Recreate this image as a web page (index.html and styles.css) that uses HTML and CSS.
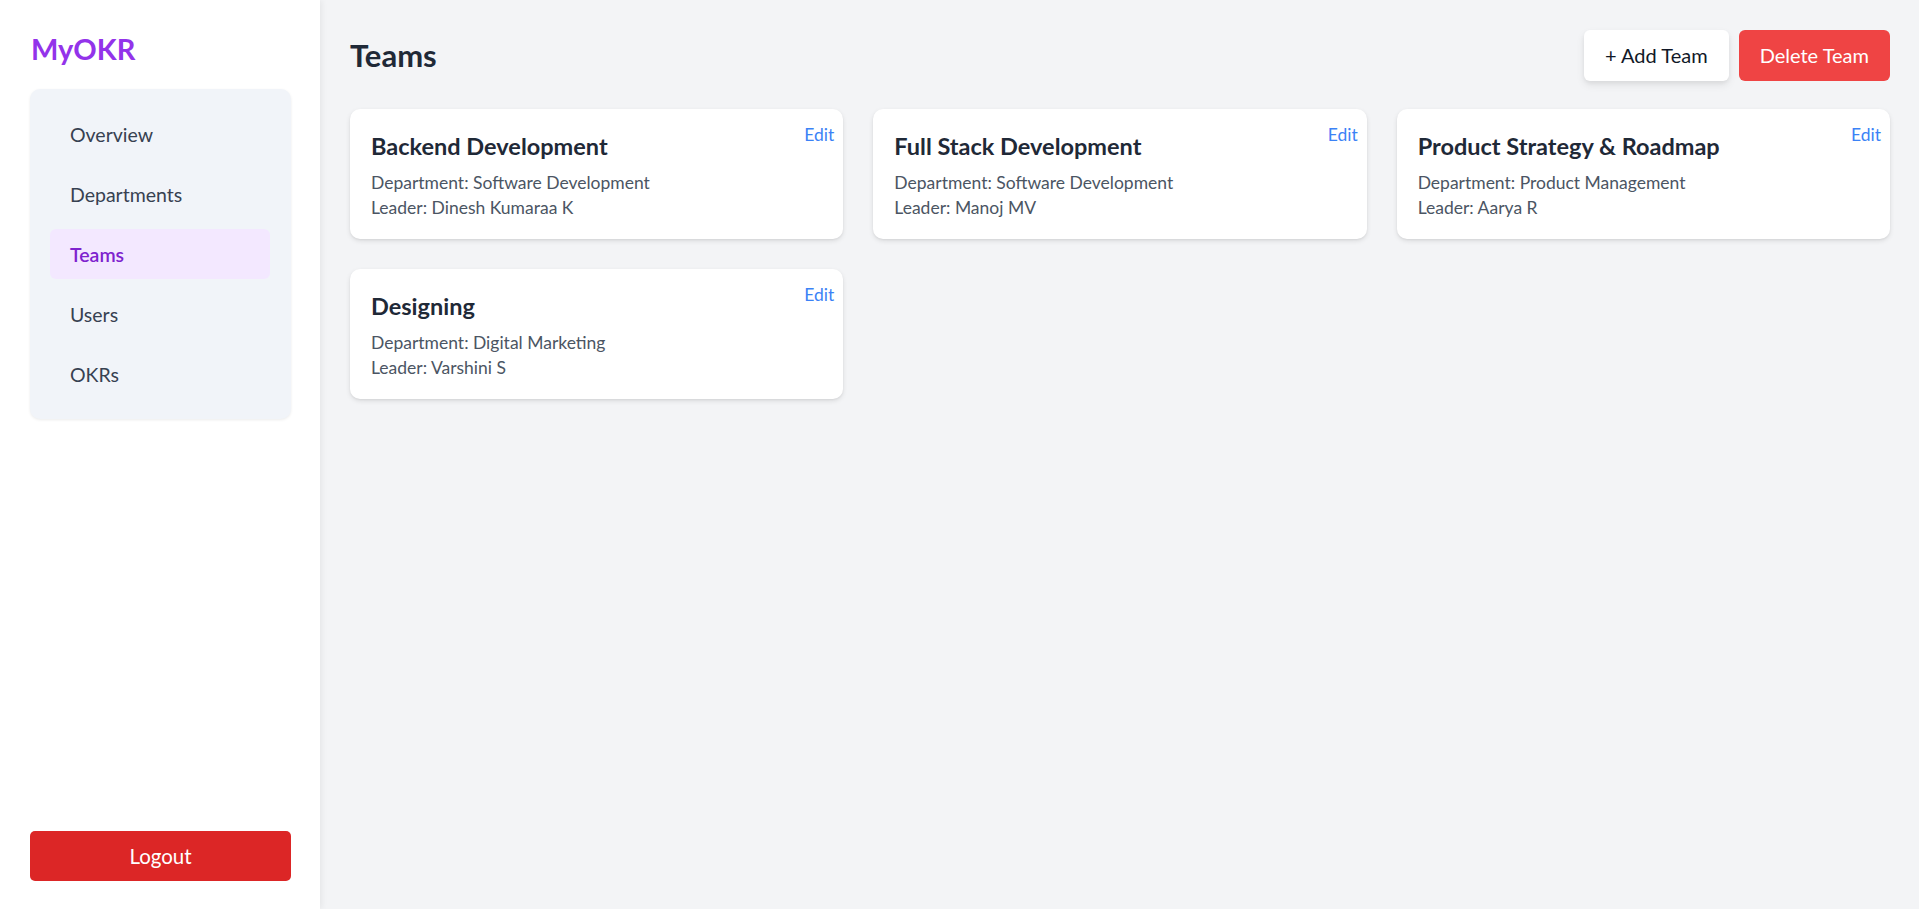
FILE: index.html
```html
<!DOCTYPE html>
<html lang="en">
<head>
<meta charset="utf-8">
<title>MyOKR - Teams</title>
<link rel="stylesheet" href="styles.css">
</head>
<body>
<div class="app">
  <aside class="sidebar">
    <div class="logo">MyOKR</div>
    <nav class="nav">
      <a class="nav-item">Overview</a>
      <a class="nav-item">Departments</a>
      <a class="nav-item active">Teams</a>
      <a class="nav-item">Users</a>
      <a class="nav-item">OKRs</a>
    </nav>
    <button class="logout">Logout</button>
  </aside>
  <main class="main">
    <header class="header">
      <h1 class="title">Teams</h1>
      <div class="actions">
        <button class="btn btn-add">+ Add Team</button>
        <button class="btn btn-delete">Delete Team</button>
      </div>
    </header>
    <section class="grid">
      <div class="card">
        <a class="edit">Edit</a>
        <h2 class="card-title">Backend Development</h2>
        <p class="card-line">Department: Software Development</p>
        <p class="card-line">Leader: Dinesh Kumaraa K</p>
      </div>
      <div class="card">
        <a class="edit">Edit</a>
        <h2 class="card-title">Full Stack Development</h2>
        <p class="card-line">Department: Software Development</p>
        <p class="card-line">Leader: Manoj MV</p>
      </div>
      <div class="card">
        <a class="edit">Edit</a>
        <h2 class="card-title">Product Strategy &amp; Roadmap</h2>
        <p class="card-line">Department: Product Management</p>
        <p class="card-line">Leader: Aarya R</p>
      </div>
      <div class="card">
        <a class="edit">Edit</a>
        <h2 class="card-title">Designing</h2>
        <p class="card-line">Department: Digital Marketing</p>
        <p class="card-line">Leader: Varshini S</p>
      </div>
    </section>
  </main>
</div>
</body>
</html>
```
FILE: styles.css
```css
* { box-sizing: border-box; }
html, body { margin: 0; padding: 0; height: 100%; }
body {
  font-family: "Segoe UI", Lato, "Noto Sans", sans-serif;
  color: #1f2937;
  background: #f3f4f6;
}
.app { display: flex; height: 100vh; }

.sidebar {
  width: 320px;
  flex-shrink: 0;
  background: #ffffff;
  box-shadow: 2px 0 6px rgba(0,0,0,0.06);
  display: flex;
  flex-direction: column;
  padding: 31px 29px 28px 30px;
  position: relative;
  z-index: 1;
}
.logo {
  font-size: 29px;
  line-height: 36px;
  font-weight: 700;
  color: #9333ea;
  padding-left: 1px;
}
.nav {
  margin-top: 22px;
  background: #f1f4f9;
  border-radius: 10px;
  box-shadow: 0 1px 3px rgba(0,0,0,0.08);
  padding: 20px 21px 20px 20px;
  display: flex;
  flex-direction: column;
  gap: 10px;
}
.nav-item {
  height: 50px;
  display: flex;
  align-items: center;
  padding-left: 20px;
  font-size: 19.5px;
  color: #374151;
  border-radius: 6px;
  cursor: pointer;
}
.nav-item.active {
  background: #f3e8ff;
  color: #7e22ce;
  font-weight: 600;
}
.logout {
  margin-top: auto;
  height: 50px;
  width: 100%;
  border: none;
  border-radius: 5px;
  background: #dc2626;
  color: #ffffff;
  font-family: inherit;
  font-size: 20.5px;
  cursor: pointer;
}

.main {
  flex: 1;
  padding: 30px 29px 30px 30px;
  background: #f3f4f6;
}
.header {
  display: flex;
  justify-content: space-between;
  align-items: center;
  height: 50px;
  margin-bottom: 29px;
}
.title {
  margin: 0;
  font-size: 31px;
  line-height: 36px;
  font-weight: 700;
  color: #1f2937;
}
.actions { display: flex; gap: 10px; }
.btn {
  height: 51px;
  border: none;
  border-radius: 6px;
  font-family: inherit;
  font-size: 20px;
  padding: 0 21px;
  cursor: pointer;
}
.btn-add {
  background: #ffffff;
  color: #111827;
  box-shadow: 0 4px 8px rgba(0,0,0,0.08), 0 2px 4px rgba(0,0,0,0.05);
}
.btn-delete {
  background: #ef4444;
  color: #ffffff;
}

.grid {
  display: grid;
  grid-template-columns: repeat(3, 1fr);
  gap: 30px;
}
.card {
  position: relative;
  background: #ffffff;
  border-radius: 10px;
  box-shadow: 0 2px 5px rgba(0,0,0,0.10), 0 1px 2px rgba(0,0,0,0.05);
  height: 130px;
  padding: 23px 21px 18px 21px;
}
.edit {
  position: absolute;
  top: 14px;
  right: 9px;
  font-size: 17.5px;
  line-height: 24px;
  color: #3b82f6;
  cursor: pointer;
}
.card-title {
  margin: 0 0 10px 0;
  font-size: 23.5px;
  line-height: 28px;
  font-weight: 700;
  color: #1f2937;
}
.card-line {
  margin: 0;
  font-size: 17.5px;
  line-height: 25px;
  color: #4b5563;
}
```
